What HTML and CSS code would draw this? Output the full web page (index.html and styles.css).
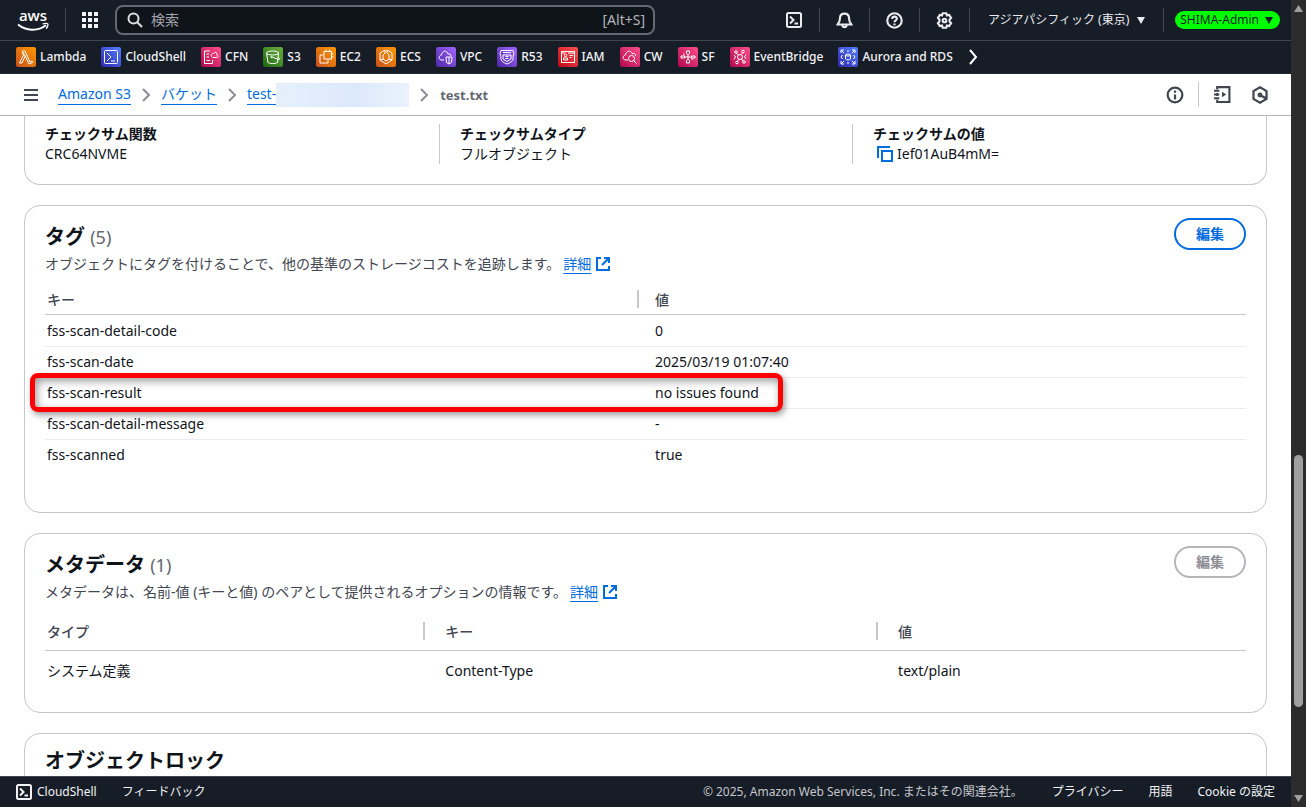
FILE: index.html
```html
<!DOCTYPE html>
<html lang="ja">
<head>
<meta charset="utf-8">
<meta name="viewport" content="width=device-width, initial-scale=1">
<title>test.txt - Amazon S3</title>
<link rel="stylesheet" href="styles.css">
</head>
<body>
<svg class="defs" aria-hidden="true">
  <defs>
    <linearGradient id="orange" x1="0" y1="1" x2="1" y2="0"><stop offset="0" stop-color="#c8511b"/><stop offset="1" stop-color="#ff9900"/></linearGradient>
    <linearGradient id="blue" x1="0" y1="1" x2="1" y2="0"><stop offset="0" stop-color="#2e27ad"/><stop offset="1" stop-color="#527fff"/></linearGradient>
    <linearGradient id="pink" x1="0" y1="1" x2="1" y2="0"><stop offset="0" stop-color="#b0084d"/><stop offset="1" stop-color="#ff4f8b"/></linearGradient>
    <linearGradient id="green" x1="0" y1="1" x2="1" y2="0"><stop offset="0" stop-color="#1b660f"/><stop offset="1" stop-color="#6cae3e"/></linearGradient>
    <linearGradient id="purple" x1="0" y1="1" x2="1" y2="0"><stop offset="0" stop-color="#4d27a8"/><stop offset="1" stop-color="#a166ff"/></linearGradient>
    <linearGradient id="red" x1="0" y1="1" x2="1" y2="0"><stop offset="0" stop-color="#bd0816"/><stop offset="1" stop-color="#ff5252"/></linearGradient>
    <symbol id="terminal" viewBox="0 0 16 16"><rect x="1" y="1" width="14" height="14" rx="1.5"/><path d="M4 4.500 7.500 8 4 11.500M8.500 11.500H12"/></symbol>
    <symbol id="external" viewBox="0 0 16 16"><path d="M6 2H2v12h12v-4M9 2h5v5M14 2 7 9"/></symbol>
    <symbol id="chevron" viewBox="0 0 10 14"><path d="m2 1 6 6-6 6"/></symbol>
  </defs>
</svg>
<div class="page">
  <header class="topbar">
    <a class="logo" href="#" aria-label="aws">
      <svg width="32" height="30" viewBox="0 0 32 30"><text x="16" y="16" text-anchor="middle" class="logo-text">aws</text><path d="M1 19.500c8 6.500 20 7 28 .8" fill="none" stroke="#fff" stroke-width="2"/><path d="M25.500 19c3-1 5.500-.8 5.500.2s-.5 3-1.800 4.500" fill="none" stroke="#fff" stroke-width="1.300"/></svg>
    </a>
    <button class="apps" aria-label="サービス">
      <svg width="16" height="16" viewBox="0 0 16 16" fill="#f3f3f7"><path d="M0 0h4v4H0zM6 0h4v4H6zM12 0h4v4h-4zM0 6h4v4H0zM6 6h4v4H6zM12 6h4v4h-4zM0 12h4v4H0zM6 12h4v4H6zM12 12h4v4h-4z"/></svg>
    </button>
    <label class="search">
      <svg class="line" width="16" height="16" viewBox="0 0 16 16"><circle cx="6.500" cy="6.500" r="5"/><path d="m10 10 5 5"/></svg>
      <input type="search" placeholder="検索" aria-label="検索">
      <span>[Alt+S]</span>
    </label>
    <div class="tools">
      <button class="tool" aria-label="CloudShell"><svg class="line" width="16" height="16"><use href="#terminal"/></svg></button>
      <button class="tool" aria-label="通知"><svg class="line" width="17" height="17" viewBox="0 0 16 16"><path d="M8 1.500c-3 0-4.300 2-4.300 4.500C3.700 9 2.500 10 1.500 11.800h13C13.500 10 12.300 9 12.300 6c0-2.500-1.300-4.500-4.300-4.500ZM6 12.500c.3 2.300 3.700 2.300 4 0"/></svg></button>
      <button class="tool" aria-label="ヘルプ"><svg class="line" width="17" height="17" viewBox="0 0 16 16"><circle cx="8" cy="8" r="6.800"/><path d="M5.800 6.500C5.800 3.600 10.200 3.700 10.200 6.300 10.200 8 8 7.800 8 9.600M8 10.800v1.600"/></svg></button>
      <button class="tool" aria-label="設定"><svg class="line" width="17" height="17" viewBox="0 0 16 16"><path d="m6.300 1.200h3.400l.6 2 2.100-.5 1.800 2.900L12.800 7v2l1.400 1.400-1.800 2.900-2.100-.5-.6 2H6.300l-.6-2-2.100.5-1.800-2.900L3.200 9V7L1.800 5.600l1.800-2.900 2.100.5Z"/><circle cx="8" cy="8" r="1.700"/></svg></button>
      <button class="region">アジアパシフィック (東京)<svg width="8" height="7" viewBox="0 0 8 7"><path d="M0 0h8L4 7z" fill="currentColor"/></svg></button>
      <div class="account-cell"><button class="account">SHIMA-Admin<svg width="8" height="7" viewBox="0 0 8 7"><path d="M0 0h8L4 7z" fill="currentColor"/></svg></button></div>
    </div>
  </header>

  <nav class="services" aria-label="お気に入り">
    <a href="#"><svg class="svc" viewBox="0 0 20 20"><rect width="20" height="20" rx="1" fill="url(#orange)"/><path d="M6 4h3l5 11 2-1 .5 1.500L13 17 8.500 7.500M9 9.500 6 16H3.500L8 7 7.200 5.500H6z"/></svg>Lambda</a>
    <a href="#"><svg class="svc" viewBox="0 0 20 20"><rect width="20" height="20" rx="1" fill="url(#blue)"/><rect x="3.500" y="3.500" width="13" height="13" rx="1"/><path d="m6 6 4 4-4 4M10 14h4"/></svg>CloudShell</a>
    <a href="#"><svg class="svc" viewBox="0 0 20 20"><rect width="20" height="20" rx="1" fill="url(#pink)"/><path d="M9 4H3.500v12.500h8V13M5.500 7H8M5.500 10H8M5.500 13.500H9M11 10c-2-2 0-4 1.500-3.500C14 4 17 6 15.800 8c2 .5 1 3-.8 2.500H11.500"/></svg>CFN</a>
    <a href="#"><svg class="svc" viewBox="0 0 20 20"><rect width="20" height="20" rx="1" fill="url(#green)"/><ellipse cx="9.500" cy="6" rx="6" ry="2"/><path d="m3.500 6 1.500 9.500c2.500 1.500 7 1.500 9.500 0L15.500 6M9 10l6.500 2.500c2 .3 1.500-1.500-.7-2.500"/><circle cx="8.500" cy="10" r=".7"/></svg>S3</a>
    <a href="#"><svg class="svc" viewBox="0 0 20 20"><rect width="20" height="20" rx="1" fill="url(#orange)"/><rect x="8" y="4.500" width="7.500" height="7.500"/><path d="M7 8H4v8h8v-3M10 2.500v2M13.500 2.500v2M15.500 7h2M15.500 10h2"/></svg>EC2</a>
    <a href="#"><svg class="svc" viewBox="0 0 20 20"><rect width="20" height="20" rx="1" fill="url(#orange)"/><path d="M9 3 4 6v7l6 4 6-4V6l-5-3v3l2 2v4l-3 2-3-2V8l2-2zM7 12l-3 1M13 12l3 1"/></svg>ECS</a>
    <a href="#"><svg class="svc" viewBox="0 0 20 20"><rect width="20" height="20" rx="1" fill="url(#purple)"/><path d="M8 13H5c-3-1-2-5 .5-5C6 3.500 11 3 12 7c2-.5 3 .5 3 2M10 10h6l-.5 5.500L13 17l-2.500-1.500zM13 10v7"/></svg>VPC</a>
    <a href="#"><svg class="svc" viewBox="0 0 20 20"><rect width="20" height="20" rx="1" fill="url(#purple)"/><path d="M4 3.500h12l1 3-1 3c1 4-2 6-6 7.500-4-1.500-7-3.500-6-7.500l-1-3zM6 5.500h8M6 8h8v4l-4 2.500L6 12zM8.500 9.500h3M8.500 11.500h3"/></svg>R53</a>
    <a href="#"><svg class="svc" viewBox="0 0 20 20"><rect width="20" height="20" rx="1" fill="url(#red)"/><rect x="3.500" y="4.500" width="13" height="11"/><circle cx="7.500" cy="8.500" r="1.300"/><path d="M5.500 13v-2h4v2zM11.500 8.500H15M11.500 10.500h2M3.500 6h4M10 6h6.500"/></svg>IAM</a>
    <a href="#"><svg class="svc" viewBox="0 0 20 20"><rect width="20" height="20" rx="1" fill="url(#pink)"/><path d="M8 13H5c-3-1-2-5 .5-5C6 3.500 11 3 12 6.500c2-.5 4 .5 3.500 2.500"/><circle cx="11.500" cy="11.500" r="3"/><path d="m13.500 13.500 3 3"/></svg>CW</a>
    <a href="#"><svg class="svc" viewBox="0 0 20 20"><rect width="20" height="20" rx="1" fill="url(#pink)"/><path d="M8.500 4h3v2.500L10 8 8.500 6.500zM8.500 16h3v-2.500L10 12l-1.500 1.500zM3 9h3.500v2H3zM17 9h-3.500v2H17zM6.500 10h7M10 8v4M6 6.500v2M14 13v-2"/></svg>SF</a>
    <a href="#"><svg class="svc" viewBox="0 0 20 20"><rect width="20" height="20" rx="1" fill="url(#pink)"/><circle cx="10" cy="10" r="2.500"/><circle cx="6" cy="5" r="1.300"/><circle cx="13" cy="4.500" r="1.300"/><circle cx="7" cy="15.500" r="1.300"/><circle cx="14" cy="15" r="1.300"/><path d="m6.500 6.300 2 1.700M12.500 6 11 7.500M7.500 14 9 12.300M13 14l-1.500-2M4 8l1.500 2L4 12.500M16 7.500 14.500 10l1.500 2"/></svg>EventBridge</a>
    <a href="#"><svg class="svc" viewBox="0 0 20 20"><rect width="20" height="20" rx="1" fill="url(#blue)"/><ellipse cx="10" cy="8" rx="2.500" ry="1"/><path d="M7.500 8v4c1 1.200 4 1.200 5 0V8M3 6V3h3M3 3l3 3M14 3h3v3M17 3l-3 3M3 14v3h3M3 17l3-3M14 17h3v-3M17 17l-3-3M4.500 8 3 10l1.500 2M15.500 8l1.500 2-1.500 2M9 4h2M9 16h2"/></svg>Aurora and RDS</a>
    <button class="more" aria-label="次へ"><svg class="line" width="10" height="16" viewBox="0 0 10 16"><path d="m2 1 6 7-6 7"/></svg></button>
  </nav>

  <div class="crumb-bar">
    <button class="plain menu" aria-label="メニュー"><svg class="line" width="14" height="12" viewBox="0 0 14 12"><path d="M0 1h14M0 6h14M0 11h14"/></svg></button>
    <nav class="crumbs" aria-label="パンくずリスト">
      <a href="#">Amazon S3</a>
      <svg class="line sep" width="10" height="14"><use href="#chevron"/></svg>
      <a href="#">バケット</a>
      <svg class="line sep" width="10" height="14"><use href="#chevron"/></svg>
      <span class="bucket"><a href="#">test-</a><span class="redacted"></span></span>
      <svg class="line sep" width="10" height="14"><use href="#chevron"/></svg>
      <strong>test.txt</strong>
    </nav>
    <div class="panel-tools">
      <button class="plain" aria-label="情報"><svg class="line" width="18" height="18" viewBox="0 0 16 16"><circle cx="8" cy="8" r="6.500"/><path d="M8 4v2M8 7.500V12"/></svg></button>
      <button class="plain divided" aria-label="チュートリアル"><svg class="line" width="17" height="17" viewBox="0 0 16 16"><path d="M3 3V1h11.500v14H3v-2M3 6.500v3M0 4.500h5M0 8h5M0 11.500h5"/><path d="m7.500 5.500 4 2.500-4 2.500z" fill="currentColor" stroke="none"/></svg></button>
      <button class="plain" aria-label="診断"><svg class="line" width="18" height="18" viewBox="0 0 16 16"><path d="m8 1.200 5.800 3.300v7L8 14.800l-5.800-3.300v-7zM8.500 8.500l5 2.500"/><circle cx="8" cy="8" r="1.200"/></svg></button>
    </div>
  </div>

  <main class="content">
    <section class="card first">
      <dl class="facts">
        <div><dt>チェックサム関数</dt><dd>CRC64NVME</dd></div>
        <div><dt>チェックサムタイプ</dt><dd>フルオブジェクト</dd></div>
        <div><dt>チェックサムの値</dt><dd class="copy"><button class="plain" aria-label="コピー"><svg class="line" width="16" height="16" viewBox="0 0 16 16"><path d="M1 12V1h12"/><rect x="5" y="5" width="10" height="10"/></svg></button>Ief01AuB4mM=</dd></div>
      </dl>
    </section>

    <section class="card tags">
      <div class="card-head">
        <div>
          <h2>タグ <span>(5)</span></h2>
          <p>オブジェクトにタグを付けることで、他の基準のストレージコストを追跡します。<a href="#">詳細<svg class="line" width="16" height="16"><use href="#external"/></svg></a></p>
        </div>
        <button class="edit">編集</button>
      </div>
      <table class="compact">
        <thead><tr><th class="half">キー</th><th>値</th></tr></thead>
        <tbody>
          <tr><td>fss-scan-detail-code</td><td>0</td></tr>
          <tr><td>fss-scan-date</td><td>2025/03/19 01:07:40</td></tr>
          <tr class="marked"><td>fss-scan-result<span class="marker"></span></td><td>no issues found</td></tr>
          <tr><td>fss-scan-detail-message</td><td>-</td></tr>
          <tr><td>fss-scanned</td><td>true</td></tr>
        </tbody>
      </table>
    </section>

    <section class="card metadata">
      <div class="card-head">
        <div>
          <h2>メタデータ <span>(1)</span></h2>
          <p>メタデータは、名前-値 (キーと値) のペアとして提供されるオプションの情報です。<a href="#">詳細<svg class="line" width="16" height="16"><use href="#external"/></svg></a></p>
        </div>
        <button class="edit" disabled>編集</button>
      </div>
      <table class="roomy">
        <thead><tr><th class="type">タイプ</th><th class="key">キー</th><th>値</th></tr></thead>
        <tbody><tr><td>システム定義</td><td>Content-Type</td><td>text/plain</td></tr></tbody>
      </table>
    </section>

    <section class="card lock">
      <h2>オブジェクトロック</h2>
    </section>
  </main>

  <footer class="footer">
    <button class="plain shell"><svg class="line" width="16" height="16"><use href="#terminal"/></svg>CloudShell</button>
    <a href="#">フィードバック</a>
    <small>© 2025, Amazon Web Services, Inc. またはその関連会社。</small>
    <a href="#">プライバシー</a>
    <a href="#">用語</a>
    <a href="#">Cookie の設定</a>
  </footer>
</div>
<div class="scrollbar" aria-hidden="true">
  <svg width="9" height="7" viewBox="0 0 9 7"><path d="M4.500 0 9 7H0z" fill="#9f9f9f"/></svg>
  <div class="track"><div class="thumb"></div></div>
  <svg width="9" height="7" viewBox="0 0 9 7"><path d="M4.500 7 9 0H0z" fill="#9f9f9f"/></svg>
</div>
</body>
</html>
```
FILE: styles.css
```css
* { box-sizing: border-box; }
body {
  margin: 0;
  display: flex;
  height: 100vh;
  overflow: hidden;
  background: #fff;
  color: #0f141a;
  font: 14px/20px "Noto Sans", "Noto Sans CJK JP", sans-serif;
}
button, input { font: inherit; color: inherit; background: none; border: 0; padding: 0; }
button, a { cursor: pointer; }
a { color: #006ce0; text-decoration: none; }
h2, p, dl, dd { margin: 0; }
svg { flex: none; display: block; }
.defs { position: absolute; width: 0; height: 0; }
.line { fill: none; stroke: currentColor; stroke-width: 2; }

.page { flex: 1; min-width: 0; display: flex; flex-direction: column; }

.topbar {
  flex: none;
  display: flex;
  align-items: center;
  height: 41px;
  background: #161d26;
  border-bottom: 1px solid #424650;
  color: #ebebf0;
  font-size: 12px;
}
.logo { display: flex; align-items: center; height: 24px; padding: 0 16px 0 17px; border-right: 1px solid #424650; }
.logo-text { font: 600 15px/16px "Open Sans", sans-serif; fill: #fff; }
.apps { padding: 0 17px 0 16px; }
.search {
  flex: 0 1 540px;
  min-width: 0;
  display: flex;
  align-items: center;
  gap: 8px;
  height: 30px;
  padding: 0 8px 0 10px;
  background: #0f141a;
  border: 2px solid #656871;
  border-radius: 8px;
  font-size: 14px;
  color: #b4b4bb;
}
.search svg { color: #dedee3; }
.search input { flex: 1; min-width: 0; outline: 0; }
.search input::placeholder { color: #a4a4ad; opacity: 1; }
.tools { margin-left: auto; display: flex; align-items: center; }
.tool { display: flex; align-items: center; justify-content: center; width: 50px; height: 24px; }
.tool + .tool, .region, .account-cell { border-left: 1px solid #424650; }
.region { display: flex; align-items: center; gap: 8px; height: 24px; padding: 0 18px; white-space: nowrap; }
.account-cell { display: flex; align-items: center; height: 24px; padding: 0 11px; }
.account {
  display: flex;
  align-items: center;
  gap: 6px;
  height: 18px;
  padding: 0 7px 0 5px;
  border-radius: 9px;
  background: #0f0;
  color: #161d26;
}

.services {
  flex: none;
  display: flex;
  align-items: center;
  gap: 15px;
  height: 33px;
  padding: 0 16px;
  overflow: hidden;
  background: #161d26;
  border-bottom: 1px solid #232b37;
  font-size: 12px;
  font-weight: 500;
}
.services a { display: flex; align-items: center; gap: 4px; color: #f3f3f7; white-space: nowrap; }
.svc { width: 20px; height: 20px; fill: none; stroke: #fff; stroke-width: 1; border-radius: 2px; }
.svc > rect:first-child { stroke: none; }
.more { color: #fff; }

.crumb-bar {
  flex: none;
  display: flex;
  align-items: center;
  height: 42px;
  padding: 0 22px 0 24px;
  border-bottom: 1px solid #b4b4bb;
}
.plain { display: flex; align-items: center; color: #424650; }
.crumbs { display: flex; align-items: center; gap: 10px; margin-left: 20px; white-space: nowrap; }
.crumbs a { border-bottom: 1px solid #006ce0; line-height: 20px; }
.crumbs strong { margin-left: 1px; font-weight: 700; font-size: 13px; color: #656871; }
.sep { color: #8c8c94; }
.bucket { display: flex; align-items: center; }
.redacted { width: 133px; height: 24px; background: linear-gradient(90deg, #e6f0fc, #dce9fb 60%, #eaf2fd); }
.panel-tools { display: flex; align-items: center; gap: 20px; margin-left: auto; }
.panel-tools .plain { height: 25px; }
.panel-tools .divided { padding-left: 15px; margin-left: -6px; border-left: 1px solid #c6c6cd; }

.content { flex: 1; min-height: 0; overflow: hidden; display: flex; flex-direction: column; gap: 20px; padding: 0 24px; }
.card { flex: none; padding: 12px 20px 0; border: 1px solid #c6c6cd; border-radius: 16px; }
.first { padding: 8px 20px 20px; border-top: 0; border-radius: 0 0 16px 16px; }
.facts { display: grid; grid-template-columns: 394fr 413fr 394fr; }
.facts > div + div { border-left: 1px solid #c6c6cd; padding-left: 20px; }
.facts dt { font-weight: 700; }
.copy { display: flex; align-items: center; gap: 4px; padding-left: 4px; }
.copy .plain { color: #006ce0; }

.card-head { display: flex; justify-content: space-between; align-items: flex-start; gap: 20px; }
.card h2 { padding-top: 7px; font-size: 20px; line-height: 24px; font-weight: 700; }
.card h2 span { font-weight: 400; font-size: 18px; color: #656871; }
.card p { margin-top: 5px; color: #424650; }
.card p a { display: inline-flex; align-items: center; gap: 4px; margin-left: 3px; line-height: 18px; text-decoration: underline; text-underline-offset: 4px; }
.edit { width: 72px; height: 32px; border: 2px solid #006ce0; border-radius: 16px; color: #006ce0; font-weight: 700; }
.edit:disabled { border-color: #b4b4bb; color: #8c8c94; cursor: default; }

table { width: 100%; border-collapse: separate; border-spacing: 0; table-layout: fixed; }
th { text-align: left; font-weight: 500; color: #424650; border-bottom: 1px solid #c6c6cd; }
th, td { padding: 0 2px; }
th + th { background: linear-gradient(#c6c6cd, #c6c6cd) left center / 2px 18px no-repeat; }

.tags { padding-bottom: 42px; }
.compact { margin-top: 10px; }
.compact th { height: 31px; padding-top: 2px; }
.compact td { height: 31px; border-bottom: 1px solid #ebebf0; }
.compact tbody tr:first-child td { height: 32px; padding-top: 1px; }
.compact tbody tr:last-child td { height: 30px; border-bottom: 0; }
.compact .half { width: 49.3%; }
.compact th + th, .compact td + td { padding-left: 18px; }
.marked { position: relative; }
.marker {
  position: absolute;
  left: -15px;
  top: -5px;
  width: 753px;
  height: 39px;
  border: 5px solid #f00;
  border-radius: 8px;
  box-shadow: 2px 3px 6px rgba(0, 0, 0, .4), inset 2px 3px 8px rgba(0, 0, 0, .4);
}

.metadata { padding-bottom: 22px; }
.roomy { margin-top: 10px; }
.roomy th { height: 39px; padding-top: 2px; }
.roomy td { height: 39px; }
.roomy .type { width: 31.5%; }
.roomy .key { width: 37.7%; }
.roomy th + th, .roomy td + td { padding-left: 22px; }

.lock { min-height: 120px; }
.lock h2 { padding-top: 3px; }

.footer {
  flex: none;
  display: flex;
  align-items: center;
  gap: 25px;
  height: 31px;
  padding: 0 16px;
  background: #161d26;
  border-top: 1px solid #424650;
  font-size: 12px;
  white-space: nowrap;
}
.footer a, .footer .shell { color: #f3f3f7; }
.shell { gap: 5px; }
.footer small { margin-left: auto; margin-right: 4px; font-size: 12px; color: #c6c6cd; }

.scrollbar {
  flex: none;
  display: flex;
  flex-direction: column;
  align-items: center;
  gap: 4px;
  width: 15px;
  padding: 5px 0;
  background: #2c2c2c;
}
.track { flex: 1; width: 9px; padding-top: 439px; }
.thumb { height: 252px; border-radius: 5px; background: #9f9f9f; }
```
